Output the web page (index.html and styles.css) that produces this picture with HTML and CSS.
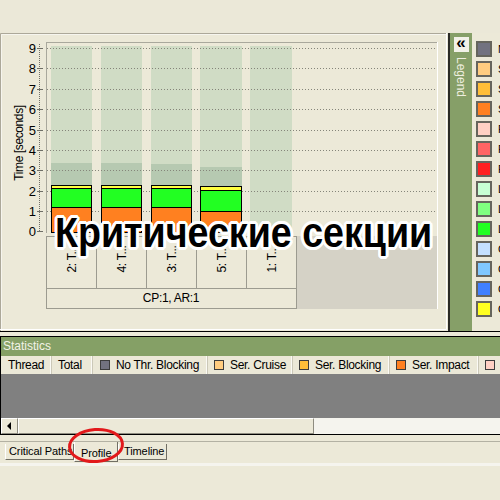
FILE: index.html
```html
<!DOCTYPE html>
<html>
<head>
<meta charset="utf-8">
<link rel="stylesheet" href="styles.css">
</head>
<body>
<div class="topbar"></div>
<div class="main">
  <div class="chart-panel">
    <svg width="448" height="298" viewBox="0 0 448 298" class="chart">
      <rect x="0" y="0" width="448" height="298" fill="#ece9d8"/>
      <path d="M0.5 298 V0.5 H446" stroke="#aca899" fill="none"/>
      <path d="M1.5 298 V1.5 H446" stroke="#f6f5ee" fill="none"/>
      <path d="M446.5 0 V296.5 H0" stroke="#ffffff" fill="none"/>
      <g fill="#d0dcc5">
        <rect x="51" y="13" width="41" height="186"/>
        <rect x="101" y="13" width="41" height="186"/>
        <rect x="151" y="13" width="41" height="186"/>
        <rect x="200" y="13" width="42" height="186"/>
        <rect x="250" y="13" width="42" height="186"/>
      </g>
      <g fill="#b6c9b1">
        <rect x="51" y="130" width="41" height="69"/>
        <rect x="101" y="130" width="41" height="69"/>
        <rect x="151" y="131" width="41" height="68"/>
        <rect x="200" y="134" width="42" height="65"/>
      </g>
      <g stroke="#85857a" stroke-dasharray="1 2" stroke-width="1">
        <line x1="47" y1="15.5" x2="437" y2="15.5"/>
        <line x1="47" y1="35.5" x2="437" y2="35.5"/>
        <line x1="47" y1="56.5" x2="437" y2="56.5"/>
        <line x1="47" y1="76.5" x2="437" y2="76.5"/>
        <line x1="47" y1="97.5" x2="437" y2="97.5"/>
        <line x1="47" y1="117.5" x2="437" y2="117.5"/>
        <line x1="47" y1="137.5" x2="437" y2="137.5"/>
        <line x1="47" y1="158.5" x2="437" y2="158.5"/>
        <line x1="47" y1="178.5" x2="437" y2="178.5"/>
      </g>
      <line x1="46" y1="9.5" x2="437" y2="9.5" stroke="#a9a89c"/>
      <line x1="46.5" y1="9" x2="46.5" y2="200" stroke="#a9a89c"/>
      <line x1="437.5" y1="9" x2="437.5" y2="276" stroke="#ffffff"/>
      <g stroke="#000" stroke-width="1">
        <rect x="51.5" y="152.5" width="40" height="3" fill="#ffff40"/>
        <rect x="51.5" y="155.5" width="40" height="19" fill="#22ff22"/>
        <rect x="51.5" y="174.5" width="40" height="25" fill="#ff8020"/>
        <rect x="101.5" y="152.5" width="40" height="3" fill="#ffff40"/>
        <rect x="101.5" y="155.5" width="40" height="19" fill="#22ff22"/>
        <rect x="101.5" y="174.5" width="40" height="25" fill="#ff8020"/>
        <rect x="151.5" y="152.5" width="40" height="3" fill="#ffff40"/>
        <rect x="151.5" y="155.5" width="40" height="19" fill="#22ff22"/>
        <rect x="151.5" y="174.5" width="40" height="25" fill="#ff8020"/>
        <rect x="200.5" y="153.5" width="41" height="4" fill="#ffff40"/>
        <rect x="200.5" y="157.5" width="41" height="21" fill="#22ff22"/>
        <rect x="200.5" y="178.5" width="41" height="21" fill="#ff8020"/>
      </g>
      <line x1="39.5" y1="11" x2="39.5" y2="199" stroke="#6e6e66" stroke-dasharray="1 1"/>
      <g stroke="#6e6e66">
        <line x1="37" y1="15.5" x2="43" y2="15.5"/>
        <line x1="37" y1="35.5" x2="43" y2="35.5"/>
        <line x1="37" y1="56.5" x2="43" y2="56.5"/>
        <line x1="37" y1="76.5" x2="43" y2="76.5"/>
        <line x1="37" y1="97.5" x2="43" y2="97.5"/>
        <line x1="37" y1="117.5" x2="43" y2="117.5"/>
        <line x1="37" y1="137.5" x2="43" y2="137.5"/>
        <line x1="37" y1="158.5" x2="43" y2="158.5"/>
        <line x1="37" y1="178.5" x2="43" y2="178.5"/>
        <line x1="37" y1="198.5" x2="43" y2="198.5"/>
      </g>
      <g class="ylab" text-anchor="end">
        <text x="36" y="20">9</text>
        <text x="36" y="40">8</text>
        <text x="36" y="61">7</text>
        <text x="36" y="81">6</text>
        <text x="36" y="102">5</text>
        <text x="36" y="122">4</text>
        <text x="36" y="142">3</text>
        <text x="36" y="163">2</text>
        <text x="36" y="183">1</text>
        <text x="36" y="203">0</text>
      </g>
      <text class="ytitle" transform="translate(23 110) rotate(-90)" text-anchor="middle">Time [seconds]</text>
      <rect x="297" y="203" width="140" height="73" fill="#d5d2c6"/>
      <rect x="46.5" y="203.5" width="250" height="72" fill="#ece9d8" stroke="#9c9b90"/>
      <line x1="46" y1="255.5" x2="297" y2="255.5" stroke="#9c9b90"/>
      <g stroke="#9c9b90">
        <line x1="96.5" y1="203" x2="96.5" y2="256"/>
        <line x1="146.5" y1="203" x2="146.5" y2="256"/>
        <line x1="196.5" y1="203" x2="196.5" y2="256"/>
        <line x1="246.5" y1="203" x2="246.5" y2="256"/>
      </g>
      <g class="xlab" text-anchor="middle">
        <text transform="translate(76 226) rotate(-90)">2: T...</text>
        <text transform="translate(126 226) rotate(-90)">4: T...</text>
        <text transform="translate(176 226) rotate(-90)">3: T...</text>
        <text transform="translate(226 226) rotate(-90)">5: T...</text>
        <text transform="translate(276 226) rotate(-90)">1: T...</text>
      </g>
      <text class="xlab" x="171" y="269" text-anchor="middle">CP:1, AR:1</text>
    </svg>
  </div>
  <div class="legend-strip">
    <div class="collapse-btn">«</div>
    <div class="legend-label">Legend</div>
  </div>
  <div class="legend-list">
    <div class="legend-item"><span class="sw" style="background:#727280"></span><span class="lg-text">No Thr. Blocking</span></div>
    <div class="legend-item"><span class="sw" style="background:#ffcc80"></span><span class="lg-text">Ser. Cruise</span></div>
    <div class="legend-item"><span class="sw" style="background:#ffbe38"></span><span class="lg-text">Ser. Blocking</span></div>
    <div class="legend-item"><span class="sw" style="background:#ff8020"></span><span class="lg-text">Ser. Impact</span></div>
    <div class="legend-item"><span class="sw" style="background:#ffd0c4"></span><span class="lg-text">Par. Cruise</span></div>
    <div class="legend-item"><span class="sw" style="background:#ff6464"></span><span class="lg-text">Par. Blocking</span></div>
    <div class="legend-item"><span class="sw" style="background:#ff2020"></span><span class="lg-text">Par. Impact</span></div>
    <div class="legend-item"><span class="sw" style="background:#c8ffd4"></span><span class="lg-text">Lock Cruise</span></div>
    <div class="legend-item"><span class="sw" style="background:#80ff80"></span><span class="lg-text">Lock Blocking</span></div>
    <div class="legend-item"><span class="sw" style="background:#22ff22"></span><span class="lg-text">Lock Impact</span></div>
    <div class="legend-item"><span class="sw" style="background:#c4e0ff"></span><span class="lg-text">Crit. Cruise</span></div>
    <div class="legend-item"><span class="sw" style="background:#80c8ff"></span><span class="lg-text">Crit. Blocking</span></div>
    <div class="legend-item"><span class="sw" style="background:#4080ff"></span><span class="lg-text">Crit. Impact</span></div>
    <div class="legend-item"><span class="sw" style="background:#ffff20"></span><span class="lg-text">Overhead</span></div>
  </div>
</div>
<div class="stats">
  <div class="stats-title">Statistics</div>
  <div class="col-head">
    <div class="col c-thread">Thread</div>
    <div class="col c-total">Total</div>
    <div class="col c-nothr"><span class="hsw" style="background:#727280"></span>No Thr. Blocking</div>
    <div class="col c-cruise"><span class="hsw" style="background:#ffcc80"></span>Ser. Cruise</div>
    <div class="col c-block"><span class="hsw" style="background:#ffbe38"></span>Ser. Blocking</div>
    <div class="col c-impact"><span class="hsw" style="background:#ff8020"></span>Ser. Impact</div>
    <div class="col c-last"><span class="hsw" style="background:#ffd0c4"></span>Par. Cruise</div>
  </div>
  <div class="stats-body"></div>
  <div class="scrollbar">
    <div class="sb-btn"><span class="sb-arrow"></span></div>
    <div class="sb-thumb"></div>
    <div class="sb-track"></div>
  </div>
</div>
<div class="tabs">
  <div class="tab t-crit">Critical Paths</div>
  <div class="tab t-prof active">Profile</div>
  <div class="tab t-time">Timeline</div>
</div>
<div class="footer"></div>
<div class="overlay-title">Критические секции</div>
<svg class="mark" width="62" height="40" viewBox="0 0 62 40">
  <ellipse cx="30" cy="19.5" rx="26.5" ry="16" fill="none" stroke="#e2191b" stroke-width="3" transform="rotate(-4 30 19.5)"/>
</svg>
</body>
</html>
```
FILE: styles.css
```css
* { box-sizing: border-box; margin: 0; padding: 0; }
html, body { width: 500px; height: 500px; overflow: hidden; background: #ece9d8; }
body {
  position: relative;
  font-family: "Liberation Sans", Arial, sans-serif;
  font-size: 11px;
  color: #000;
}
.topbar { height: 33px; background: #ebe8d8; }
.main {
  display: flex;
  height: 299px;
  border-bottom: 1px solid #000;
  overflow: hidden;
}
.chart-panel { width: 448px; height: 298px; flex: none; }
.chart { display: block; }
.chart text { font-family: "Liberation Sans", Arial, sans-serif; fill: #000; }
.ylab text { font-size: 13px; }
.ytitle { font-size: 12px; letter-spacing: -0.4px; }
.xlab, .xlab text { font-size: 12px; letter-spacing: -0.3px; }
.legend-strip {
  width: 24px;
  flex: none;
  border-left: 2px solid #2b2b26;
  background: #869f68;
  display: flex;
  flex-direction: column;
  align-items: center;
  padding-top: 4px;
}
.collapse-btn {
  width: 15px;
  height: 15px;
  background: #f2f1e8;
  font-weight: bold;
  font-size: 17px;
  line-height: 12px;
  text-align: center;
}
.legend-label {
  writing-mode: vertical-rl;
  margin-top: 5px;
  color: #eeeedf;
  font-size: 12px;
}
.legend-list {
  flex: 1;
  display: flex;
  flex-direction: column;
  gap: 4px;
  padding: 8px 0 0 4px;
  overflow: hidden;
}
.legend-item { display: flex; align-items: center; height: 16px; white-space: nowrap; }
.sw { width: 16px; height: 16px; border: 2px solid #66655d; flex: none; }
.lg-text { margin-left: 6px; font-size: 11px; }
.stats {
  margin-top: 4px;
  height: 99px;
  border: 1px solid #000;
  border-right: none;
  overflow: hidden;
}
.stats-title {
  height: 19px;
  background: #85a066;
  color: #f3f3e6;
  font-size: 12px;
  line-height: 19px;
  padding-left: 2px;
}
.col-head { display: flex; height: 18px; background: #ebe8d7; white-space: nowrap; }
.col {
  display: flex;
  align-items: center;
  flex: none;
  padding-left: 6px;
  border-right: 1px solid #cbc8b8;
  box-shadow: inset -1px 0 0 #fbfaf5;
  font-size: 12px;
  letter-spacing: -0.3px;
}
.c-thread { width: 51px; padding-left: 7px; }
.c-total { width: 41px; }
.c-nothr { width: 115px; padding-left: 7px; }
.c-cruise { width: 85px; }
.c-block { width: 97px; }
.c-impact { width: 89px; }
.c-last { width: 120px; }
.hsw { width: 10px; height: 10px; border: 1px solid #3c3c3c; margin-right: 6px; flex: none; }
.stats-body { height: 44px; background: #808080; }
.scrollbar { display: flex; height: 16px; }
.sb-btn {
  width: 17px;
  background: #ece9d8;
  border: 1px solid;
  border-color: #fff #8e8c80 #8e8c80 #fff;
  display: flex;
  align-items: center;
  padding-left: 5px;
}
.sb-arrow {
  width: 0; height: 0;
  border-top: 4px solid transparent;
  border-bottom: 4px solid transparent;
  border-right: 4px solid #000;
}
.sb-thumb {
  width: 296px;
  background: #ece9d8;
  border: 1px solid;
  border-color: #fff #8e8c80 #8e8c80 #fff;
}
.sb-track { flex: 1; background: #f5f4ee; }
.tabs {
  margin-top: 6px;
  height: 22px;
  border-top: 1px solid #b3b1a3;
  display: flex;
  align-items: flex-start;
  padding-left: 5px;
  font-size: 11px;
  letter-spacing: -0.1px;
}
.tab {
  margin-top: 2px;
  height: 16px;
  line-height: 14px;
  padding-left: 3px;
  background: #ece9d8;
  border-left: 1px solid #fff;
  border-right: 1px solid #716f64;
  border-bottom: 1px solid #716f64;
  white-space: nowrap;
}
.t-crit { width: 69px; }
.t-prof { width: 44px; padding-left: 6px; }
.t-time { width: 49px; padding-left: 5px; }
.tab.active { margin-top: 0; height: 20px; padding-top: 4px; }
.footer { height: 3px; background: #f5f4ee; margin-top: 0; }
.overlay-title {
  position: absolute;
  left: 55px;
  top: 211px;
  font-size: 43px;
  line-height: 1;
  font-weight: bold;
  white-space: nowrap;
  transform: scaleX(0.875);
  transform-origin: left top;
  color: #000;
  text-shadow:
    3px 0 0 #fff, -3px 0 0 #fff, 0 3px 0 #fff, 0 -3px 0 #fff,
    2px 2px 0 #fff, -2px 2px 0 #fff, 2px -2px 0 #fff, -2px -2px 0 #fff,
    3px 1px 0 #fff, -3px 1px 0 #fff, 3px -1px 0 #fff, -3px -1px 0 #fff,
    1px 3px 0 #fff, -1px 3px 0 #fff, 1px -3px 0 #fff, -1px -3px 0 #fff;
}
.mark { position: absolute; left: 66px; top: 426px; }
```
